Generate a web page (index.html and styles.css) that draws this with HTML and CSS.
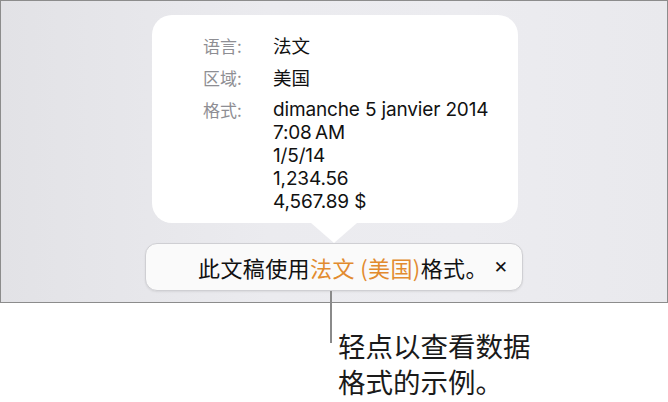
FILE: index.html
```html
<!DOCTYPE html>
<html lang="zh">
<head>
<meta charset="utf-8">
<title>语言和区域</title>
<link rel="stylesheet" href="styles.css">
</head>
<body>
<div class="screen">
  <div class="popover">
    <div class="grid">
      <div class="label">语言:</div>
      <div class="value">法文</div>
      <div class="label">区域:</div>
      <div class="value">美国</div>
      <div class="label">格式:</div>
      <div class="value latin">
        <div>dimanche 5 janvier 2014</div>
        <div>7:08&#8201;AM</div>
        <div>1/5/14</div>
        <div>1,234.56</div>
        <div>4,567.89 $</div>
      </div>
    </div>
  </div>
  <div class="bar">
    <span class="msg">此文稿使用<span class="accent">法文 (美国)</span>格式。</span>
    <span class="close">✕</span>
  </div>
</div>
<div class="callout">
  <div class="leader"></div>
  <div class="callout-text">
    <div class="callout-line">轻点以查看数据</div>
    <div class="callout-line">格式的示例。</div>
  </div>
</div>
</body>
</html>
```

FILE: styles.css
```css
html, body {
  margin: 0;
  padding: 0;
  background: #ffffff;
}
body {
  width: 668px;
  height: 402px;
  overflow: hidden;
  font-family: "Inter", "Noto Sans CJK SC", sans-serif;
}
.screen {
  box-sizing: border-box;
  width: 668px;
  height: 303px;
  border: 1.5px solid #8c8c8c;
  border-left-width: 1px;
  background: linear-gradient(to right, #e2e2e6 0%, #ebebef 40%, #ececf0 70%, #e9e9ed 100%);
  display: flex;
  flex-direction: column;
  align-items: center;
  padding-top: 13.5px;
}
.popover {
  position: relative;
  box-sizing: border-box;
  width: 366px;
  height: 208px;
  margin-left: 2px;
  background: #ffffff;
  border-radius: 20px;
  padding: 19px 0 0 51px;
}
.popover::after {
  content: "";
  position: absolute;
  left: 159px;
  bottom: -20px;
  width: 0;
  height: 0;
  border-left: 23px solid transparent;
  border-right: 23px solid transparent;
  border-top: 20px solid #ffffff;
}
.grid {
  display: grid;
  grid-template-columns: 70px auto;
  row-gap: 9px;
  font-size: 17px;
  line-height: 23px;
}
.label {
  font-family: "Noto Sans CJK SC", sans-serif;
  color: #8e8e93;
  font-size: 17px;
}
.value {
  font-family: "Noto Sans CJK SC", sans-serif;
  color: #111111;
  font-size: 18.5px;
}
.value.latin {
  font-family: "Inter", "Noto Sans CJK SC", sans-serif;
  font-size: 19px;
  letter-spacing: -0.15px;
}
.bar {
  box-sizing: border-box;
  width: 378px;
  height: 48px;
  margin-top: 20px;
  background: #fafafa;
  border: 1px solid #cfcfd3;
  border-radius: 12px;
  box-shadow: 0 1px 2px rgba(0, 0, 0, 0.08);
  display: flex;
  align-items: center;
  padding: 0 14px 0 52px;
}
.msg {
  font-family: "Noto Sans CJK SC", sans-serif;
  font-size: 22px;
  color: #111111;
  letter-spacing: 0.4px;
}
.accent {
  color: #e28b2f;
}
.close {
  margin-left: auto;
  font-family: "DejaVu Sans", sans-serif;
  font-weight: bold;
  font-size: 17px;
  color: #111111;
}
.callout {
  display: flex;
  align-items: flex-start;
  margin-left: 330px;
}
.leader {
  width: 2px;
  height: 52px;
  margin-top: -12px;
  background: #8a8a8a;
}
.callout-text {
  margin-left: 6px;
  padding-top: 24px;
  font-family: "Noto Sans CJK SC", sans-serif;
  font-size: 27.5px;
  color: #1a1a1a;
}
.callout-line {
  height: 36px;
  line-height: 36px;
}
```
